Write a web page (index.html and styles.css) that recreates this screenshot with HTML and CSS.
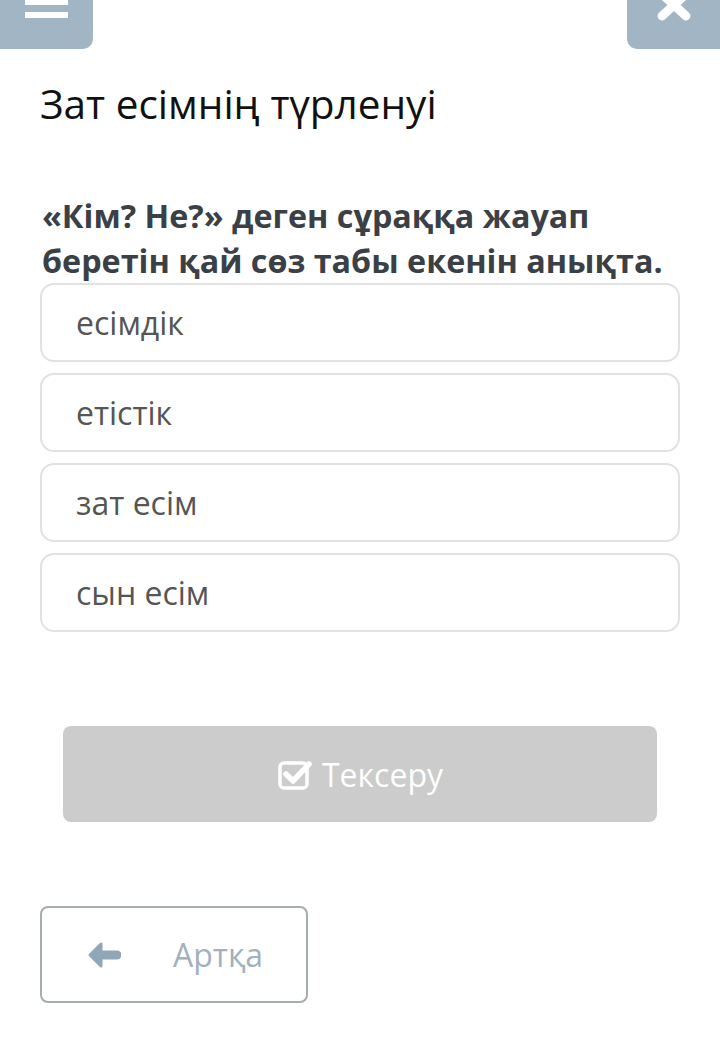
FILE: index.html
```html
<!DOCTYPE html>
<html lang="kk">
<head>
    <meta charset="UTF-8">
    <meta name="viewport" content="width=device-width, initial-scale=1.0">
    <title>Зат есімнің түрленуі</title>
    <link rel="stylesheet" href="styles.css">
</head>
<body>
    <div class="topbar">
        <button class="top-btn menu-btn" type="button">
            <span class="bar"></span>
            <span class="bar"></span>
        </button>
        <button class="top-btn close-btn" type="button">
            <svg width="36" height="30" viewBox="0 0 36 30">
                <path d="M6 -6 L30 16 M30 -6 L6 16" stroke="#fff" stroke-width="9" stroke-linecap="round"/>
            </svg>
        </button>
    </div>

    <div class="container">
        <h1 class="title">Зат есімнің түрленуі</h1>
        <p class="question">«Кім? Не?» деген сұраққа жауап беретін қай сөз табы екенін анықта.</p>

        <ul class="options">
            <li class="option">есімдік</li>
            <li class="option">етістік</li>
            <li class="option">зат есім</li>
            <li class="option">сын есім</li>
        </ul>

        <button class="check-btn" type="button">
            <svg width="36" height="36" viewBox="0 0 36 36">
                <rect x="3" y="7" width="27" height="25" rx="4" fill="none" stroke="#fff" stroke-width="3.5"/>
                <path d="M9 18 L16 25 L32 8" fill="none" stroke="#fff" stroke-width="5.5" stroke-linecap="round" stroke-linejoin="round"/>
            </svg>
            <span>Тексеру</span>
        </button>

        <button class="back-btn" type="button">
            <svg width="34" height="28" viewBox="0 0 34 28">
                <path d="M14 3 L3 14 L14 25 Z" fill="#8fa7b7" stroke="#8fa7b7" stroke-width="3" stroke-linejoin="round"/>
                <path d="M12 14 L30 14" stroke="#8fa7b7" stroke-width="9" stroke-linecap="round"/>
            </svg>
            <span>Артқа</span>
        </button>
    </div>
</body>
</html>
```

FILE: styles.css
```css
body {
    font-family: 'Open Sans', 'Noto Sans', sans-serif;
    background-color: #fff;
    margin: 0;
    padding: 0;
}

.topbar {
    display: flex;
    justify-content: space-between;
    height: 49px;
}

.top-btn {
    width: 93px;
    height: 49px;
    border: none;
    padding: 0;
    background-color: #a1b5c4;
    position: relative;
}

.menu-btn {
    border-radius: 0 0 10px 0;
}

.close-btn {
    border-radius: 0 0 0 10px;
}

.menu-btn .bar {
    position: absolute;
    left: 25px;
    width: 43px;
    height: 6px;
    background-color: #fff;
}

.menu-btn .bar:first-child {
    top: -1px;
}

.menu-btn .bar:last-child {
    top: 12px;
}

.close-btn svg {
    position: absolute;
    left: 29px;
    top: 0;
}

.container {
    padding: 0 40px;
}

.title {
    font-size: 40.5px;
    font-weight: 400;
    color: #111;
    margin: 28px 0 0;
    line-height: 54px;
}

.question {
    font-size: 32.3px;
    font-weight: 700;
    color: #3b4046;
    line-height: 45px;
    margin: 62px 0 0 2px;
}

.options {
    list-style: none;
    padding: 0;
    margin: 0;
}

.option {
    height: 75px;
    border: 2px solid #e2e2e2;
    border-radius: 14px;
    margin-bottom: 11px;
    padding-left: 34px;
    display: flex;
    align-items: center;
    font-size: 32px;
    color: #555;
    width: 602px;
}

.check-btn {
    display: flex;
    align-items: center;
    justify-content: center;
    gap: 9px;
    width: 594px;
    height: 96px;
    margin: 94px 0 0 23px;
    border: none;
    border-radius: 8px;
    background-color: #cccccc;
    color: #fff;
    font-family: inherit;
    font-size: 32px;
}

.back-btn {
    display: flex;
    align-items: center;
    width: 268px;
    height: 97px;
    margin-top: 84px;
    border: 2px solid #a5adb1;
    border-radius: 8px;
    background-color: #fff;
    color: #a2b1bd;
    font-family: inherit;
    font-size: 32px;
    padding: 0 0 0 45px;
}

.back-btn span {
    margin-left: 52px;
}
```
